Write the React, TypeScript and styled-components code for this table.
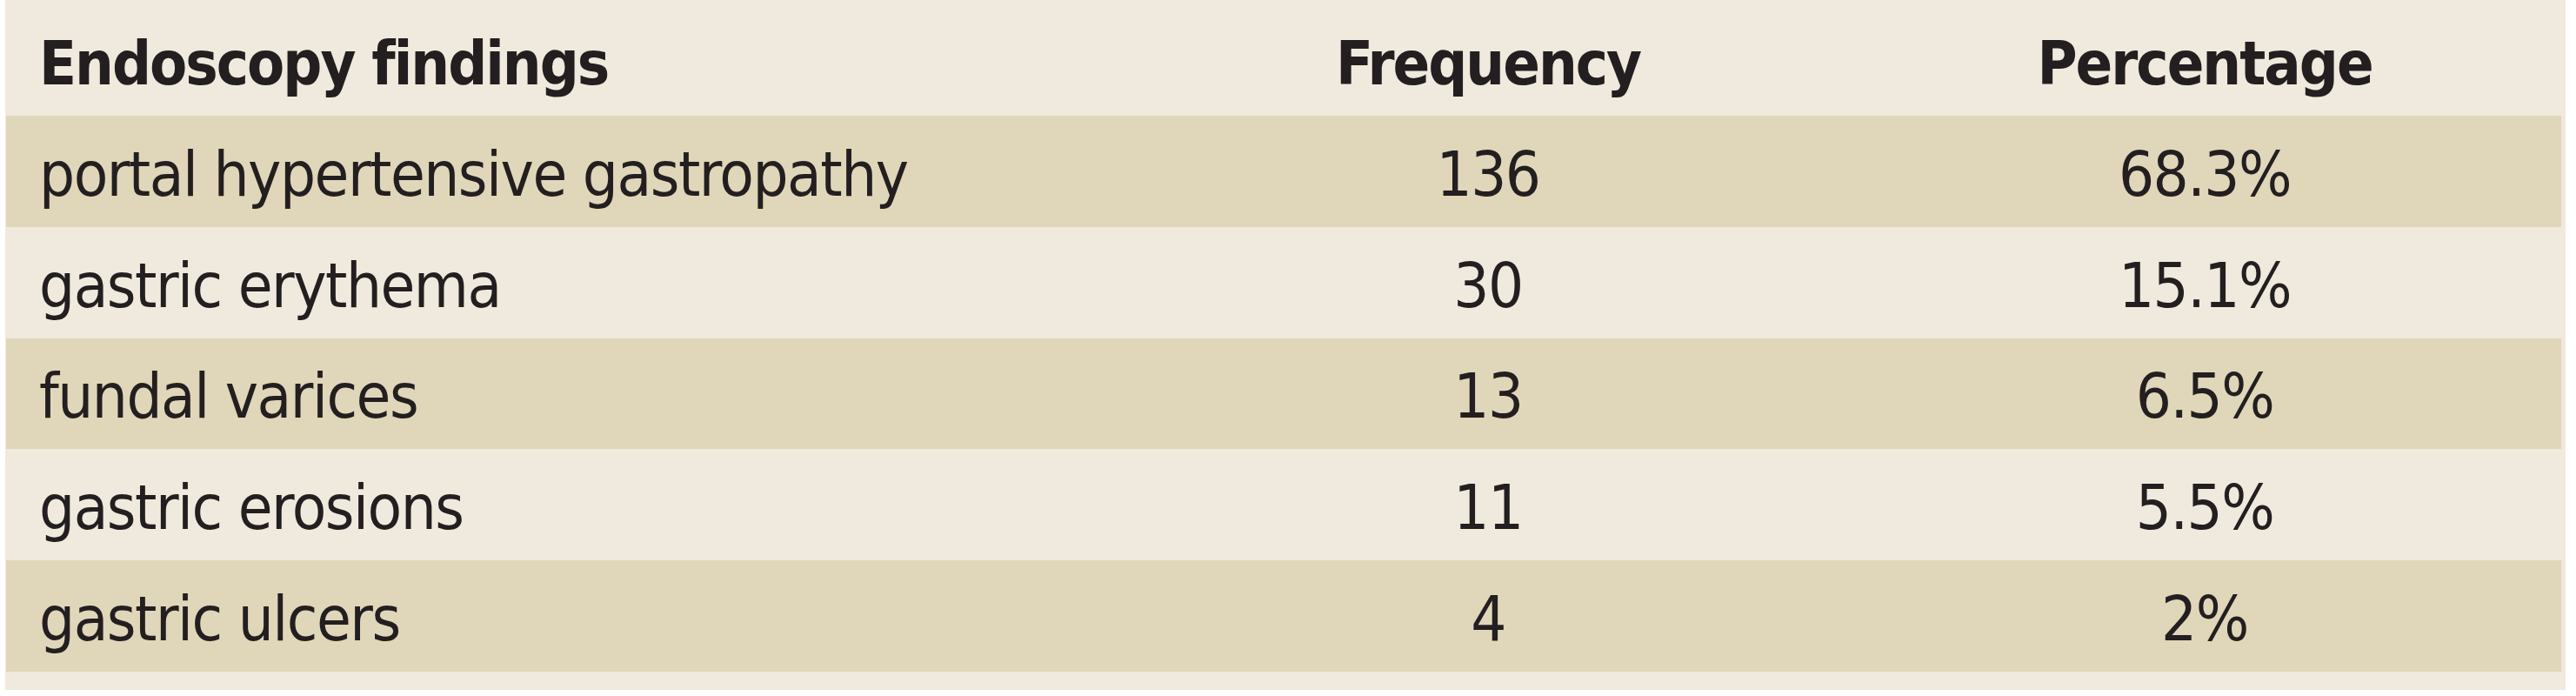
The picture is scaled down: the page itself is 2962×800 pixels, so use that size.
import React from 'react';
import styled, { createGlobalStyle } from 'styled-components';

const GlobalStyle = createGlobalStyle`
  html, body {
    margin: 0;
    padding: 0;
    background: #ffffff;
  }
`;

interface Finding {
  name: string;
  frequency: number;
  percentage: string;
}

const findings: Finding[] = [
  { name: 'portal hypertensive gastropathy', frequency: 136, percentage: '68.3%' },
  { name: 'gastric erythema', frequency: 30, percentage: '15.1%' },
  { name: 'fundal varices', frequency: 13, percentage: '6.5%' },
  { name: 'gastric erosions', frequency: 11, percentage: '5.5%' },
  { name: 'gastric ulcers', frequency: 4, percentage: '2%' },
];

const Frame = styled.div`
  width: 2944px;
  height: 793px;
  margin-left: 6px;
  padding: 0 5px 21px 1px;
  box-sizing: border-box;
  background: #f0e9dd;
  display: flex;
  flex-direction: column;
  font-family: 'DejaVu Sans Condensed', 'DejaVu Sans', sans-serif;
  color: #231f20;
`;

const Row = styled.div<{ $striped?: boolean; $header?: boolean }>`
  display: grid;
  grid-template-columns: 1290px 828px 820px;
  align-items: center;
  height: ${(p) => (p.$header ? '133px' : '128px')};
  padding-top: ${(p) => (p.$header ? '14px' : '6px')};
  box-sizing: border-box;
  background: ${(p) => (p.$striped ? '#e0d6b9' : 'transparent')};
  font-size: ${(p) => (p.$header ? '70px' : '72px')};
  font-weight: ${(p) => (p.$header ? 700 : 400)};
  letter-spacing: ${(p) => (p.$header ? '-2px' : '-1.5px')};
`;

const Cell = styled.div<{ $first?: boolean }>`
  white-space: nowrap;
  text-align: ${(p) => (p.$first ? 'left' : 'center')};
  padding-left: ${(p) => (p.$first ? '38px' : '0')};
`;

export default function App() {
  return (
    <>
      <GlobalStyle />
      <Frame>
        <Row $header>
          <Cell $first>Endoscopy findings</Cell>
          <Cell>Frequency</Cell>
          <Cell>Percentage</Cell>
        </Row>
        {findings.map((f, i) => (
          <Row key={f.name} $striped={i % 2 === 0}>
            <Cell $first>{f.name}</Cell>
            <Cell>{f.frequency}</Cell>
            <Cell>{f.percentage}</Cell>
          </Row>
        ))}
      </Frame>
    </>
  );
}
